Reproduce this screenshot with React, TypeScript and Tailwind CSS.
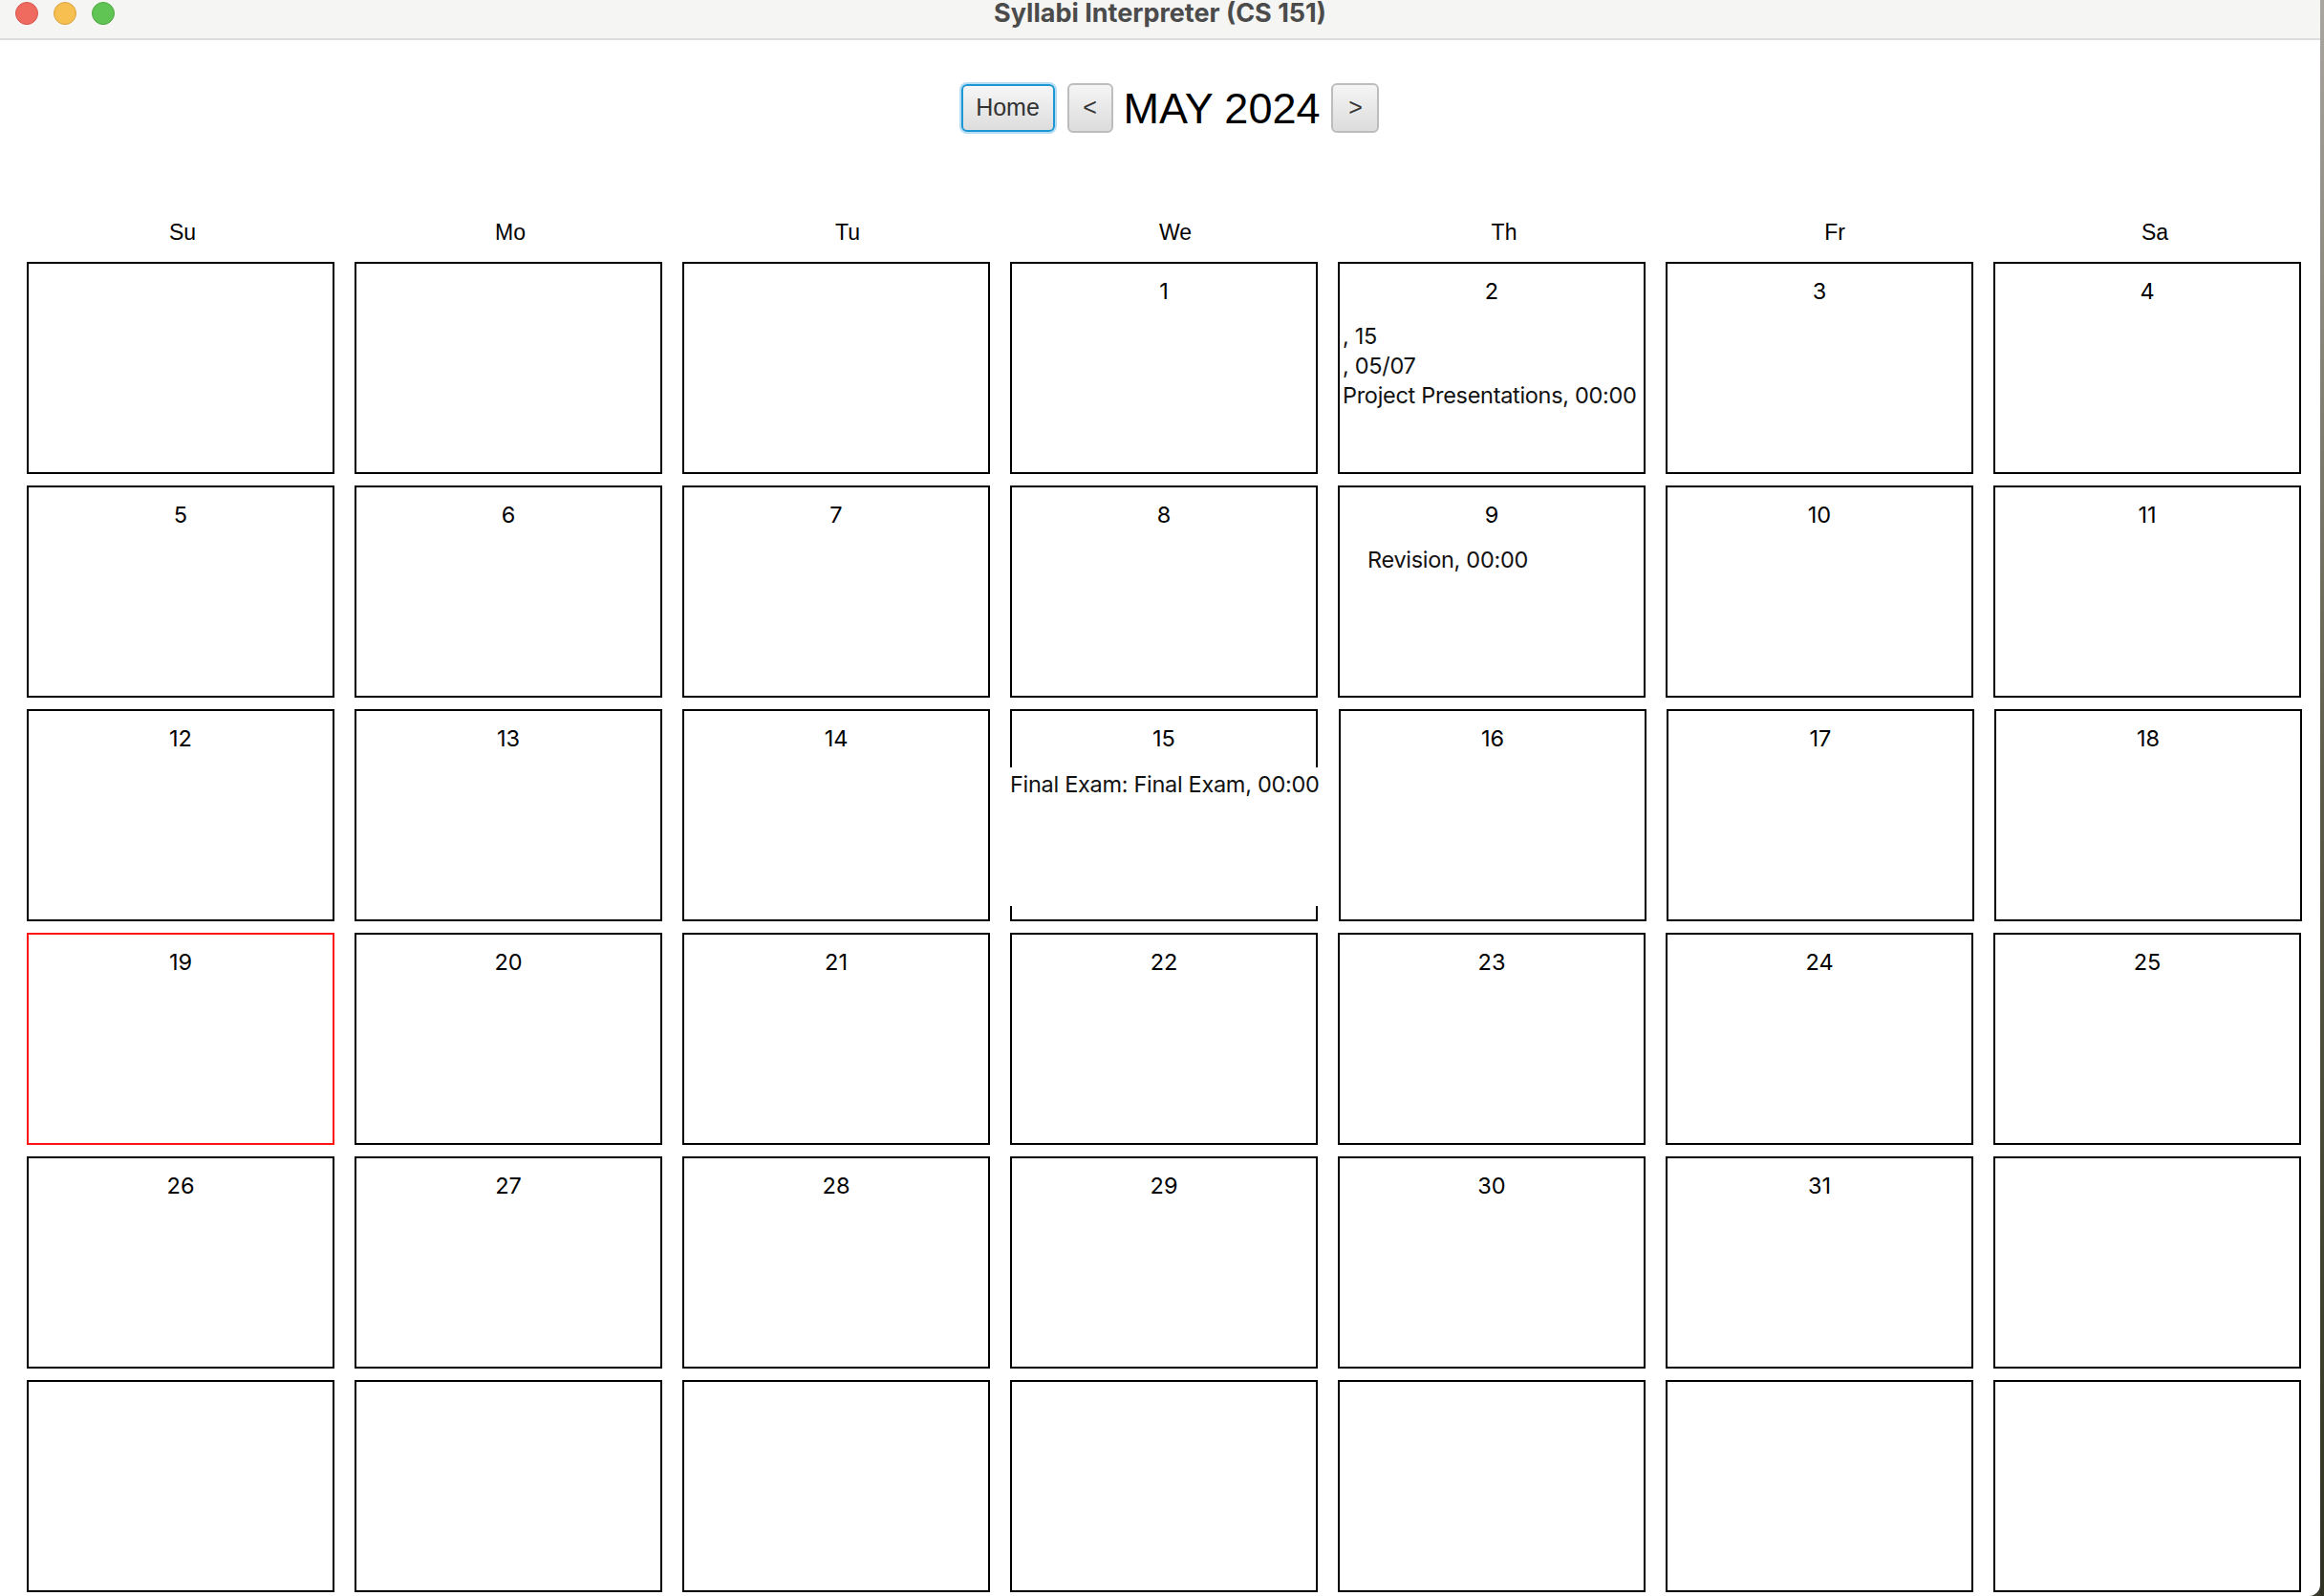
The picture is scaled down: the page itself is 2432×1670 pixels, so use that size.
import React from "react";

const weeks: (number | null)[][] = [
  [null, null, null, 1, 2, 3, 4],
  [5, 6, 7, 8, 9, 10, 11],
  [12, 13, 14, 15, 16, 17, 18],
  [19, 20, 21, 22, 23, 24, 25],
  [26, 27, 28, 29, 30, 31, null],
  [null, null, null, null, null, null, null],
];

const headers = [
  { t: "Su", cls: "pl-[4px]" },
  { t: "Mo", cls: "pl-[4px]" },
  { t: "Tu", cls: "pl-[24px]" },
  { t: "We", cls: "pl-[24px]" },
  { t: "Th", cls: "pl-[26px]" },
  { t: "Fr", cls: "pl-[32px]" },
  { t: "Sa", cls: "pl-[16px]" },
];

function DayCell({ day }: { day: number | null }) {
  const today = day === 19;
  const shifted = day !== null && day >= 16 && day <= 18;
  const border = today ? "border-[#ff1414]" : "border-black";
  if (day === 15) {
    return (
      <div className="relative h-[222px] border-2 border-black bg-white">
        <div className="pt-[17px] text-center text-[23.5px] leading-[24px] text-black">15</div>
        <div className="absolute left-[-3px] right-[-3px] top-[59px] h-[145px] bg-white pt-[2px] pl-[1px] text-[23.5px] leading-[31px] tracking-[-0.3px] text-[#111] whitespace-nowrap">
          Final Exam: Final Exam, 00:00
        </div>
      </div>
    );
  }
  return (
    <div
      className={`h-[222px] border-2 ${border} bg-white ${shifted ? "ml-[1px] -mr-[1px]" : ""}`}
    >
      {day !== null && (
        <div className="pt-[17px] text-center text-[23.5px] leading-[24px] text-black">{day}</div>
      )}
      {day === 2 && (
        <div className="mt-[19px] pl-[3px] text-[23.5px] leading-[31px] tracking-[-0.3px] text-[#111] whitespace-nowrap">
          <div>, 15</div>
          <div>, 05/07</div>
          <div>Project Presentations, 00:00</div>
        </div>
      )}
      {day === 9 && (
        <div className="mt-[19px] pl-[29px] text-[23.5px] leading-[31px] tracking-[-0.3px] text-[#111] whitespace-nowrap">
          Revision, 00:00
        </div>
      )}
    </div>
  );
}

export default function App() {
  return (
    <div
      className="flex h-[1670px] w-[2432px] overflow-hidden bg-[#3a3a2c]"
      style={{ fontFamily: "Inter, 'Noto Sans', sans-serif" }}
    >
      <div className="flex h-[1670px] w-[2428px] flex-col overflow-hidden rounded-br-[12px] bg-white">
        {/* Title bar */}
        <div className="relative flex h-[42px] shrink-0 items-start border-b-2 border-[#dcdcdb] bg-[#f5f5f3]">
          <div className="flex items-center gap-[16px] pl-[16px] pt-[2px]">
            <span className="block h-[24px] w-[24px] rounded-full border border-[#d7554b] bg-[#ef6b60]" />
            <span className="block h-[24px] w-[24px] rounded-full border border-[#d9a23f] bg-[#f6bf50]" />
            <span className="block h-[24px] w-[24px] rounded-full border border-[#4ca93f] bg-[#60c454]" />
          </div>
          <div className="absolute inset-x-0 top-0 flex justify-center">
            <span className="text-[27px] font-bold leading-[28px] text-[#4b4b4b]">
              Syllabi Interpreter (CS 151)
            </span>
          </div>
        </div>

        {/* Toolbar */}
        <div
          className="mt-[44px] flex h-[54px] shrink-0 items-center justify-center pl-[21px]"
          style={{ fontFamily: "'Liberation Sans', Arial, sans-serif" }}
        >
          <button className="flex h-[50px] w-[98px] items-center justify-center rounded-[6px] border-2 border-[#1d96d4] bg-gradient-to-b from-[#f6f6f6] to-[#dddddd] text-[25px] text-[#333] shadow-[0_0_0_2px_rgba(120,195,235,0.55)]">
            Home
          </button>
          <button className="ml-[13px] flex h-[52px] w-[48px] items-center justify-center rounded-[6px] border-2 border-[#bdbdbd] bg-gradient-to-b from-[#f5f5f5] to-[#dcdcdc] text-[25px] text-[#333]">
            &lt;
          </button>
          <span className="ml-[11px] text-[45px] leading-none text-black">MAY 2024</span>
          <button className="ml-[12px] flex h-[52px] w-[50px] items-center justify-center rounded-[6px] border-2 border-[#bdbdbd] bg-gradient-to-b from-[#f5f5f5] to-[#dcdcdc] text-[25px] text-[#333]">
            &gt;
          </button>
        </div>

        {/* Day headers */}
        <div
          className="mt-[90px] grid shrink-0 grid-cols-[repeat(7,322px)] gap-x-[21px] px-[28px]"
          style={{ fontFamily: "'Liberation Sans', Arial, sans-serif" }}
        >
          {headers.map((h) => (
            <div key={h.t} className={`pt-[2px] text-center text-[23px] leading-[23px] text-black ${h.cls}`}>
              {h.t}
            </div>
          ))}
        </div>

        {/* Calendar grid */}
        <div className="mt-[19px] grid grid-cols-[repeat(7,322px)] gap-x-[21px] gap-y-[12px] px-[28px]">
          {weeks.flat().map((d, i) => (
            <DayCell key={i} day={d} />
          ))}
        </div>
      </div>
      <div className="h-full flex-1 bg-gradient-to-b from-[#a9a59f] via-[#5b5a48] to-[#2f3222]" />
    </div>
  );
}
